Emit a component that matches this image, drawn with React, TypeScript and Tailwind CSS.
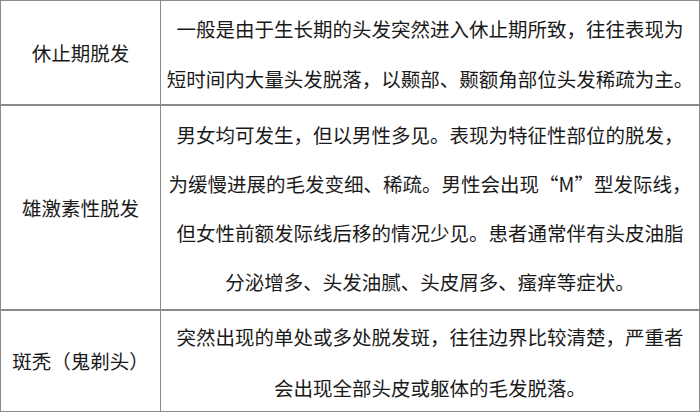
const font = { fontFamily: '"Noto Sans CJK SC", "Noto Sans", sans-serif' }

// Three-row comparison table: hair-loss type on the left, description on the right.
const rows: { name: string; lines: string[]; h: string; pt: string; lh: string }[] = [
  {
    name: '休止期脱发',
    lines: ['一般是由于生长期的头发突然进入休止期所致，往往表现为', '短时间内大量头发脱落，以颞部、颞额角部位头发稀疏为主。'],
    h: 'h-[103px]',
    pt: 'pt-[3px]',
    lh: 'leading-[50px]',
  },
  {
    name: '雄激素性脱发',
    lines: [
      '男女均可发生，但以男性多见。表现为特征性部位的脱发，',
      '为缓慢进展的毛发变细、稀疏。男性会出现“M”型发际线，',
      '但女性前额发际线后移的情况少见。患者通常伴有头皮油脂',
      '分泌增多、头发油腻、头皮屑多、瘙痒等症状。',
    ],
    h: 'h-[206px]',
    pt: 'pt-[4px]',
    lh: 'leading-[49px]',
  },
  {
    name: '斑秃（鬼剃头）',
    lines: ['突然出现的单处或多处脱发斑，往往边界比较清楚，严重者', '会出现全部头皮或躯体的毛发脱落。'],
    h: 'h-[102px]',
    pt: 'pt-[0px]',
    lh: 'leading-[51px]',
  },
]

export default function App() {
  return (
    <div className="h-[412px] w-[700px] overflow-hidden bg-white text-[#1a1a1a]" style={font}>
      <div className="flex h-[412px] flex-col border border-[#8a8a8a]">
        {rows.map((r, i) => (
          <div key={i} className={`flex ${r.h} ${i > 0 ? 'border-t-2 border-[#8a8a8a]' : ''}`}>
            <div className="flex w-[160px] shrink-0 items-center justify-center border-r border-[#8a8a8a] text-[19.5px]">
              {r.name}
            </div>
            <div className={`flex-1 ${r.pt} text-center text-[19.5px] ${r.lh}`}>
              {r.lines.map((l, j) => (
                <div key={j} className="whitespace-nowrap">
                  {l}
                </div>
              ))}
            </div>
          </div>
        ))}
      </div>
    </div>
  )
}
